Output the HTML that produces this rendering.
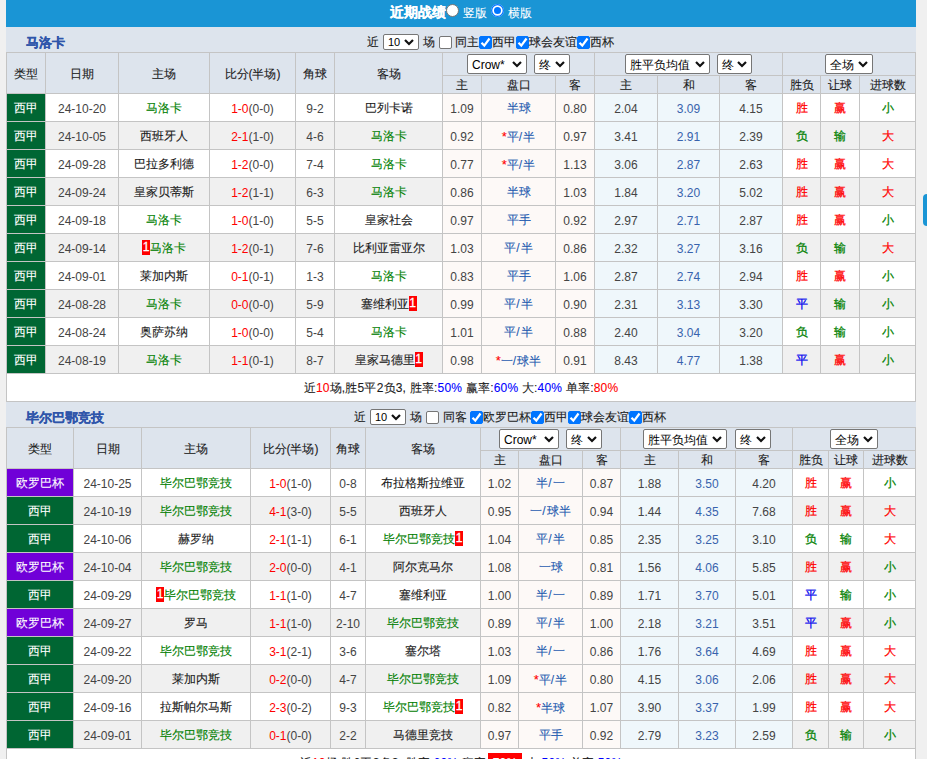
<!DOCTYPE html><html><head><meta charset="utf-8"><style>
*{margin:0;padding:0;box-sizing:border-box}
html,body{width:927px;height:759px;overflow:hidden;background:#f0f0f0;font-family:"Liberation Sans",sans-serif;font-size:12px;color:#1a1a1a}
body>div{position:absolute}
.c{position:absolute;text-align:center;white-space:nowrap;overflow:hidden;-webkit-text-stroke:0.1px}
.n{-webkit-text-stroke:0}
.t{position:absolute;white-space:nowrap;line-height:18px;-webkit-text-stroke:0.1px}
.ttl{position:absolute;font-size:13px;font-weight:bold;color:#2f55aa;-webkit-text-stroke:0.2px;line-height:25px;white-space:nowrap}
.hd{position:absolute;font-size:14px;font-weight:bold;color:#fff;-webkit-text-stroke:0.2px;line-height:22px;white-space:nowrap}
.sel{position:absolute;background:#fff;border:1px solid #767676;border-radius:2px;color:#000;white-space:nowrap}
.st{position:absolute;left:4px;top:1px}
.cb{position:absolute;width:13px;height:13px;border:1px solid #767676;border-radius:2px;background:#fff}
.cb.on{background:#0075ff;border-color:#0075ff}
.rad{position:absolute;width:13px;height:13px;border-radius:50%;background:#fff;border:1px solid #767676}
.rad.on{background:#0075ff;border:none;box-shadow:inset 0 0 0 1.3px #0075ff,inset 0 0 0 3px #fff}
.n{font-style:normal;position:relative;top:1px}
.rc{display:inline-block;background:#ff0000;color:#fff;font-weight:normal;font-size:12px;line-height:15px;width:8px;text-align:center;-webkit-text-stroke:0.3px;vertical-align:middle;margin-top:-2px}
</style></head><body><div style="left:6px;top:0;width:910px;height:27px;background:#1a95d5"></div>
<div class="hd" style="left:390px;top:1px;">近期战绩</div>
<div class="rad" style="left:446px;top:4px"></div>
<div class="t" style="left:463px;top:4px;color:#fff">竖版</div>
<div class="rad on" style="left:491px;top:4px"></div>
<div class="t" style="left:508px;top:4px;color:#fff">横版</div>
<div style="left:923px;top:194px;width:10px;height:32px;background:#1a95d5;border-radius:4px"></div>
<div style="left:6px;top:27px;width:910px;height:25px;background:#dde4ed"></div>
<div class="ttl" style="left:26px;top:30px;">马洛卡</div>
<div class="t" style="left:367px;top:33px;">近</div><div class="sel" style="left:383px;top:34px;width:36px;height:16px;line-height:15px"><span class="st" style="font-size:11px;top:0px">10</span><svg class="chev" width="10" height="7" viewBox="0 0 10 7" style="position:absolute;right:4px;top:4px"><path d="M1 1 L5 5 L9 1" fill="none" stroke="#111" stroke-width="2.2"/></svg></div><div class="t" style="left:423px;top:33px;">场</div><div class="cb" style="left:439px;top:36px"></div><div class="t" style="left:455px;top:33px;">同主</div><div class="cb on" style="left:479px;top:36px"><svg width="13" height="13" viewBox="0 0 13 13" style="position:absolute;left:0;top:0"><path d="M1.5 5.7 L4.3 8.6 L9.5 1.5" fill="none" stroke="#fff" stroke-width="2.2"/></svg></div><div class="t" style="left:492px;top:33px;">西甲</div><div class="cb on" style="left:516px;top:36px"><svg width="13" height="13" viewBox="0 0 13 13" style="position:absolute;left:0;top:0"><path d="M1.5 5.7 L4.3 8.6 L9.5 1.5" fill="none" stroke="#fff" stroke-width="2.2"/></svg></div><div class="t" style="left:529px;top:33px;">球会友谊</div><div class="cb on" style="left:577px;top:36px"><svg width="13" height="13" viewBox="0 0 13 13" style="position:absolute;left:0;top:0"><path d="M1.5 5.7 L4.3 8.6 L9.5 1.5" fill="none" stroke="#fff" stroke-width="2.2"/></svg></div><div class="t" style="left:590px;top:33px;">西杯</div>
<div style="left:6px;top:52px;width:910px;height:41px;background:#dde4ed"></div>
<div style="left:6px;top:94px;width:910px;height:27px;background:#ffffff"></div>
<div style="left:443px;top:94px;width:151px;height:27px;background:#fdf9f7"></div>
<div style="left:595px;top:94px;width:187px;height:27px;background:#eff7fb"></div>
<div style="left:7px;top:94px;width:38px;height:27px;background:#006633"></div>
<div style="left:6px;top:122px;width:910px;height:27px;background:#f0f0f0"></div>
<div style="left:443px;top:122px;width:151px;height:27px;background:#fdf9f7"></div>
<div style="left:595px;top:122px;width:187px;height:27px;background:#eff7fb"></div>
<div style="left:7px;top:122px;width:38px;height:27px;background:#006633"></div>
<div style="left:6px;top:150px;width:910px;height:27px;background:#ffffff"></div>
<div style="left:443px;top:150px;width:151px;height:27px;background:#fdf9f7"></div>
<div style="left:595px;top:150px;width:187px;height:27px;background:#eff7fb"></div>
<div style="left:7px;top:150px;width:38px;height:27px;background:#006633"></div>
<div style="left:6px;top:178px;width:910px;height:27px;background:#f0f0f0"></div>
<div style="left:443px;top:178px;width:151px;height:27px;background:#fdf9f7"></div>
<div style="left:595px;top:178px;width:187px;height:27px;background:#eff7fb"></div>
<div style="left:7px;top:178px;width:38px;height:27px;background:#006633"></div>
<div style="left:6px;top:206px;width:910px;height:27px;background:#ffffff"></div>
<div style="left:443px;top:206px;width:151px;height:27px;background:#fdf9f7"></div>
<div style="left:595px;top:206px;width:187px;height:27px;background:#eff7fb"></div>
<div style="left:7px;top:206px;width:38px;height:27px;background:#006633"></div>
<div style="left:6px;top:234px;width:910px;height:27px;background:#f0f0f0"></div>
<div style="left:443px;top:234px;width:151px;height:27px;background:#fdf9f7"></div>
<div style="left:595px;top:234px;width:187px;height:27px;background:#eff7fb"></div>
<div style="left:7px;top:234px;width:38px;height:27px;background:#006633"></div>
<div style="left:6px;top:262px;width:910px;height:27px;background:#ffffff"></div>
<div style="left:443px;top:262px;width:151px;height:27px;background:#fdf9f7"></div>
<div style="left:595px;top:262px;width:187px;height:27px;background:#eff7fb"></div>
<div style="left:7px;top:262px;width:38px;height:27px;background:#006633"></div>
<div style="left:6px;top:290px;width:910px;height:27px;background:#f0f0f0"></div>
<div style="left:443px;top:290px;width:151px;height:27px;background:#fdf9f7"></div>
<div style="left:595px;top:290px;width:187px;height:27px;background:#eff7fb"></div>
<div style="left:7px;top:290px;width:38px;height:27px;background:#006633"></div>
<div style="left:6px;top:318px;width:910px;height:27px;background:#ffffff"></div>
<div style="left:443px;top:318px;width:151px;height:27px;background:#fdf9f7"></div>
<div style="left:595px;top:318px;width:187px;height:27px;background:#eff7fb"></div>
<div style="left:7px;top:318px;width:38px;height:27px;background:#006633"></div>
<div style="left:6px;top:346px;width:910px;height:27px;background:#f0f0f0"></div>
<div style="left:443px;top:346px;width:151px;height:27px;background:#fdf9f7"></div>
<div style="left:595px;top:346px;width:187px;height:27px;background:#eff7fb"></div>
<div style="left:7px;top:346px;width:38px;height:27px;background:#006633"></div>
<div style="left:6px;top:374px;width:910px;height:27px;background:#fff"></div>
<div style="left:6px;top:52px;width:910px;height:1px;background:#c4c4c4"></div>
<div style="left:6px;top:93px;width:910px;height:1px;background:#c4c4c4"></div>
<div style="left:442px;top:75px;width:474px;height:1px;background:#c4c4c4"></div>
<div style="left:6px;top:121px;width:910px;height:1px;background:#c4c4c4"></div>
<div style="left:6px;top:149px;width:910px;height:1px;background:#c4c4c4"></div>
<div style="left:6px;top:177px;width:910px;height:1px;background:#c4c4c4"></div>
<div style="left:6px;top:205px;width:910px;height:1px;background:#c4c4c4"></div>
<div style="left:6px;top:233px;width:910px;height:1px;background:#c4c4c4"></div>
<div style="left:6px;top:261px;width:910px;height:1px;background:#c4c4c4"></div>
<div style="left:6px;top:289px;width:910px;height:1px;background:#c4c4c4"></div>
<div style="left:6px;top:317px;width:910px;height:1px;background:#c4c4c4"></div>
<div style="left:6px;top:345px;width:910px;height:1px;background:#c4c4c4"></div>
<div style="left:6px;top:373px;width:910px;height:1px;background:#c4c4c4"></div>
<div style="left:6px;top:401px;width:910px;height:1px;background:#c4c4c4"></div>
<div style="left:6px;top:52px;width:1px;height:350px;background:#c4c4c4"></div>
<div style="left:45px;top:52px;width:1px;height:322px;background:#c4c4c4"></div>
<div style="left:118px;top:52px;width:1px;height:322px;background:#c4c4c4"></div>
<div style="left:209px;top:52px;width:1px;height:322px;background:#c4c4c4"></div>
<div style="left:295px;top:52px;width:1px;height:322px;background:#c4c4c4"></div>
<div style="left:334px;top:52px;width:1px;height:322px;background:#c4c4c4"></div>
<div style="left:442px;top:52px;width:1px;height:322px;background:#c4c4c4"></div>
<div style="left:481px;top:75px;width:1px;height:299px;background:#c4c4c4"></div>
<div style="left:555px;top:75px;width:1px;height:299px;background:#c4c4c4"></div>
<div style="left:594px;top:52px;width:1px;height:322px;background:#c4c4c4"></div>
<div style="left:657px;top:75px;width:1px;height:299px;background:#c4c4c4"></div>
<div style="left:719px;top:75px;width:1px;height:299px;background:#c4c4c4"></div>
<div style="left:782px;top:52px;width:1px;height:322px;background:#c4c4c4"></div>
<div style="left:820px;top:75px;width:1px;height:299px;background:#c4c4c4"></div>
<div style="left:859px;top:75px;width:1px;height:299px;background:#c4c4c4"></div>
<div style="left:915px;top:52px;width:1px;height:350px;background:#c4c4c4"></div>
<div class="c" style="left:7px;top:54px;width:38px;height:40px;line-height:40px;">类型</div>
<div class="c" style="left:46px;top:54px;width:72px;height:40px;line-height:40px;">日期</div>
<div class="c" style="left:119px;top:54px;width:90px;height:40px;line-height:40px;">主场</div>
<div class="c" style="left:210px;top:54px;width:85px;height:40px;line-height:40px;">比分(半场)</div>
<div class="c" style="left:296px;top:54px;width:38px;height:40px;line-height:40px;">角球</div>
<div class="c" style="left:335px;top:54px;width:107px;height:40px;line-height:40px;">客场</div>
<div class="c" style="left:443px;top:77px;width:38px;height:17px;line-height:17px;">主</div>
<div class="c" style="left:482px;top:77px;width:73px;height:17px;line-height:17px;">盘口</div>
<div class="c" style="left:556px;top:77px;width:38px;height:17px;line-height:17px;">客</div>
<div class="c" style="left:595px;top:77px;width:62px;height:17px;line-height:17px;">主</div>
<div class="c" style="left:658px;top:77px;width:61px;height:17px;line-height:17px;">和</div>
<div class="c" style="left:720px;top:77px;width:62px;height:17px;line-height:17px;">客</div>
<div class="c" style="left:783px;top:77px;width:37px;height:17px;line-height:17px;">胜负</div>
<div class="c" style="left:821px;top:77px;width:38px;height:17px;line-height:17px;">让球</div>
<div class="c" style="left:860px;top:77px;width:55px;height:17px;line-height:17px;">进球数</div>
<div class="sel" style="left:467px;top:54px;width:60px;height:20px;line-height:19px"><span class="st" style="font-size:12px;top:1px">Crow*</span><svg class="chev" width="10" height="7" viewBox="0 0 10 7" style="position:absolute;right:4px;top:6px"><path d="M1 1 L5 5 L9 1" fill="none" stroke="#111" stroke-width="2.2"/></svg></div><div class="sel" style="left:534px;top:54px;width:36px;height:20px;line-height:19px"><span class="st" style="font-size:12px;top:1px">终</span><svg class="chev" width="10" height="7" viewBox="0 0 10 7" style="position:absolute;right:4px;top:6px"><path d="M1 1 L5 5 L9 1" fill="none" stroke="#111" stroke-width="2.2"/></svg></div><div class="sel" style="left:625px;top:54px;width:85px;height:20px;line-height:19px"><span class="st" style="font-size:12px;top:1px">胜平负均值</span><svg class="chev" width="10" height="7" viewBox="0 0 10 7" style="position:absolute;right:4px;top:6px"><path d="M1 1 L5 5 L9 1" fill="none" stroke="#111" stroke-width="2.2"/></svg></div><div class="sel" style="left:717px;top:54px;width:35px;height:20px;line-height:19px"><span class="st" style="font-size:12px;top:1px">终</span><svg class="chev" width="10" height="7" viewBox="0 0 10 7" style="position:absolute;right:4px;top:6px"><path d="M1 1 L5 5 L9 1" fill="none" stroke="#111" stroke-width="2.2"/></svg></div><div class="sel" style="left:825px;top:54px;width:48px;height:20px;line-height:19px"><span class="st" style="font-size:12px;top:1px">全场</span><svg class="chev" width="10" height="7" viewBox="0 0 10 7" style="position:absolute;right:4px;top:6px"><path d="M1 1 L5 5 L9 1" fill="none" stroke="#111" stroke-width="2.2"/></svg></div>
<div class="c" style="left:7px;top:95px;width:38px;height:27px;line-height:27px;color:#fff">西甲</div>
<div class="c" style="left:46px;top:95px;width:72px;height:27px;line-height:27px;color:#444"><i class="n">24-10-20</i></div>
<div class="c" style="left:119px;top:95px;width:90px;height:27px;line-height:27px;"><span style="color:#008000">马洛卡</span></div>
<div class="c" style="left:210px;top:95px;width:85px;height:27px;line-height:27px;color:#444"><span style="color:#ff0000"><i class="n">1-0</i></span><i class="n">(0-0)</i></div>
<div class="c" style="left:296px;top:95px;width:38px;height:27px;line-height:27px;color:#444"><i class="n">9-2</i></div>
<div class="c" style="left:335px;top:95px;width:107px;height:27px;line-height:27px;"><span>巴列卡诺</span></div>
<div class="c" style="left:443px;top:95px;width:38px;height:27px;line-height:27px;color:#444"><i class="n">1.09</i></div>
<div class="c" style="left:482px;top:95px;width:73px;height:27px;line-height:27px;color:#1f5bb0">半球</div>
<div class="c" style="left:556px;top:95px;width:38px;height:27px;line-height:27px;color:#444"><i class="n">0.80</i></div>
<div class="c" style="left:595px;top:95px;width:62px;height:27px;line-height:27px;color:#444"><i class="n">2.04</i></div>
<div class="c" style="left:658px;top:95px;width:61px;height:27px;line-height:27px;color:#3863ad"><i class="n">3.09</i></div>
<div class="c" style="left:720px;top:95px;width:62px;height:27px;line-height:27px;color:#444"><i class="n">4.15</i></div>
<div class="c" style="left:783px;top:95px;width:37px;height:27px;line-height:27px;color:#ff0000;-webkit-text-stroke:0.25px">胜</div>
<div class="c" style="left:821px;top:95px;width:38px;height:27px;line-height:27px;color:#ff0000;-webkit-text-stroke:0.25px">赢</div>
<div class="c" style="left:860px;top:95px;width:55px;height:27px;line-height:27px;color:#008000;-webkit-text-stroke:0.25px">小</div>
<div class="c" style="left:7px;top:123px;width:38px;height:27px;line-height:27px;color:#fff">西甲</div>
<div class="c" style="left:46px;top:123px;width:72px;height:27px;line-height:27px;color:#444"><i class="n">24-10-05</i></div>
<div class="c" style="left:119px;top:123px;width:90px;height:27px;line-height:27px;"><span>西班牙人</span></div>
<div class="c" style="left:210px;top:123px;width:85px;height:27px;line-height:27px;color:#444"><span style="color:#ff0000"><i class="n">2-1</i></span><i class="n">(1-0)</i></div>
<div class="c" style="left:296px;top:123px;width:38px;height:27px;line-height:27px;color:#444"><i class="n">4-6</i></div>
<div class="c" style="left:335px;top:123px;width:107px;height:27px;line-height:27px;"><span style="color:#008000">马洛卡</span></div>
<div class="c" style="left:443px;top:123px;width:38px;height:27px;line-height:27px;color:#444"><i class="n">0.92</i></div>
<div class="c" style="left:482px;top:123px;width:73px;height:27px;line-height:27px;color:#1f5bb0"><span style="color:#ff0000;font-size:13px">*</span>平<span style="margin-right:1px">/</span>半</div>
<div class="c" style="left:556px;top:123px;width:38px;height:27px;line-height:27px;color:#444"><i class="n">0.97</i></div>
<div class="c" style="left:595px;top:123px;width:62px;height:27px;line-height:27px;color:#444"><i class="n">3.41</i></div>
<div class="c" style="left:658px;top:123px;width:61px;height:27px;line-height:27px;color:#3863ad"><i class="n">2.91</i></div>
<div class="c" style="left:720px;top:123px;width:62px;height:27px;line-height:27px;color:#444"><i class="n">2.39</i></div>
<div class="c" style="left:783px;top:123px;width:37px;height:27px;line-height:27px;color:#008000;-webkit-text-stroke:0.25px">负</div>
<div class="c" style="left:821px;top:123px;width:38px;height:27px;line-height:27px;color:#008000;-webkit-text-stroke:0.25px">输</div>
<div class="c" style="left:860px;top:123px;width:55px;height:27px;line-height:27px;color:#ff0000;-webkit-text-stroke:0.25px">大</div>
<div class="c" style="left:7px;top:151px;width:38px;height:27px;line-height:27px;color:#fff">西甲</div>
<div class="c" style="left:46px;top:151px;width:72px;height:27px;line-height:27px;color:#444"><i class="n">24-09-28</i></div>
<div class="c" style="left:119px;top:151px;width:90px;height:27px;line-height:27px;"><span>巴拉多利德</span></div>
<div class="c" style="left:210px;top:151px;width:85px;height:27px;line-height:27px;color:#444"><span style="color:#ff0000"><i class="n">1-2</i></span><i class="n">(0-0)</i></div>
<div class="c" style="left:296px;top:151px;width:38px;height:27px;line-height:27px;color:#444"><i class="n">7-4</i></div>
<div class="c" style="left:335px;top:151px;width:107px;height:27px;line-height:27px;"><span style="color:#008000">马洛卡</span></div>
<div class="c" style="left:443px;top:151px;width:38px;height:27px;line-height:27px;color:#444"><i class="n">0.77</i></div>
<div class="c" style="left:482px;top:151px;width:73px;height:27px;line-height:27px;color:#1f5bb0"><span style="color:#ff0000;font-size:13px">*</span>平<span style="margin-right:1px">/</span>半</div>
<div class="c" style="left:556px;top:151px;width:38px;height:27px;line-height:27px;color:#444"><i class="n">1.13</i></div>
<div class="c" style="left:595px;top:151px;width:62px;height:27px;line-height:27px;color:#444"><i class="n">3.06</i></div>
<div class="c" style="left:658px;top:151px;width:61px;height:27px;line-height:27px;color:#3863ad"><i class="n">2.87</i></div>
<div class="c" style="left:720px;top:151px;width:62px;height:27px;line-height:27px;color:#444"><i class="n">2.63</i></div>
<div class="c" style="left:783px;top:151px;width:37px;height:27px;line-height:27px;color:#ff0000;-webkit-text-stroke:0.25px">胜</div>
<div class="c" style="left:821px;top:151px;width:38px;height:27px;line-height:27px;color:#ff0000;-webkit-text-stroke:0.25px">赢</div>
<div class="c" style="left:860px;top:151px;width:55px;height:27px;line-height:27px;color:#ff0000;-webkit-text-stroke:0.25px">大</div>
<div class="c" style="left:7px;top:179px;width:38px;height:27px;line-height:27px;color:#fff">西甲</div>
<div class="c" style="left:46px;top:179px;width:72px;height:27px;line-height:27px;color:#444"><i class="n">24-09-24</i></div>
<div class="c" style="left:119px;top:179px;width:90px;height:27px;line-height:27px;"><span>皇家贝蒂斯</span></div>
<div class="c" style="left:210px;top:179px;width:85px;height:27px;line-height:27px;color:#444"><span style="color:#ff0000"><i class="n">1-2</i></span><i class="n">(1-1)</i></div>
<div class="c" style="left:296px;top:179px;width:38px;height:27px;line-height:27px;color:#444"><i class="n">6-3</i></div>
<div class="c" style="left:335px;top:179px;width:107px;height:27px;line-height:27px;"><span style="color:#008000">马洛卡</span></div>
<div class="c" style="left:443px;top:179px;width:38px;height:27px;line-height:27px;color:#444"><i class="n">0.86</i></div>
<div class="c" style="left:482px;top:179px;width:73px;height:27px;line-height:27px;color:#1f5bb0">半球</div>
<div class="c" style="left:556px;top:179px;width:38px;height:27px;line-height:27px;color:#444"><i class="n">1.03</i></div>
<div class="c" style="left:595px;top:179px;width:62px;height:27px;line-height:27px;color:#444"><i class="n">1.84</i></div>
<div class="c" style="left:658px;top:179px;width:61px;height:27px;line-height:27px;color:#3863ad"><i class="n">3.20</i></div>
<div class="c" style="left:720px;top:179px;width:62px;height:27px;line-height:27px;color:#444"><i class="n">5.02</i></div>
<div class="c" style="left:783px;top:179px;width:37px;height:27px;line-height:27px;color:#ff0000;-webkit-text-stroke:0.25px">胜</div>
<div class="c" style="left:821px;top:179px;width:38px;height:27px;line-height:27px;color:#ff0000;-webkit-text-stroke:0.25px">赢</div>
<div class="c" style="left:860px;top:179px;width:55px;height:27px;line-height:27px;color:#ff0000;-webkit-text-stroke:0.25px">大</div>
<div class="c" style="left:7px;top:207px;width:38px;height:27px;line-height:27px;color:#fff">西甲</div>
<div class="c" style="left:46px;top:207px;width:72px;height:27px;line-height:27px;color:#444"><i class="n">24-09-18</i></div>
<div class="c" style="left:119px;top:207px;width:90px;height:27px;line-height:27px;"><span style="color:#008000">马洛卡</span></div>
<div class="c" style="left:210px;top:207px;width:85px;height:27px;line-height:27px;color:#444"><span style="color:#ff0000"><i class="n">1-0</i></span><i class="n">(1-0)</i></div>
<div class="c" style="left:296px;top:207px;width:38px;height:27px;line-height:27px;color:#444"><i class="n">5-5</i></div>
<div class="c" style="left:335px;top:207px;width:107px;height:27px;line-height:27px;"><span>皇家社会</span></div>
<div class="c" style="left:443px;top:207px;width:38px;height:27px;line-height:27px;color:#444"><i class="n">0.97</i></div>
<div class="c" style="left:482px;top:207px;width:73px;height:27px;line-height:27px;color:#1f5bb0">平手</div>
<div class="c" style="left:556px;top:207px;width:38px;height:27px;line-height:27px;color:#444"><i class="n">0.92</i></div>
<div class="c" style="left:595px;top:207px;width:62px;height:27px;line-height:27px;color:#444"><i class="n">2.97</i></div>
<div class="c" style="left:658px;top:207px;width:61px;height:27px;line-height:27px;color:#3863ad"><i class="n">2.71</i></div>
<div class="c" style="left:720px;top:207px;width:62px;height:27px;line-height:27px;color:#444"><i class="n">2.87</i></div>
<div class="c" style="left:783px;top:207px;width:37px;height:27px;line-height:27px;color:#ff0000;-webkit-text-stroke:0.25px">胜</div>
<div class="c" style="left:821px;top:207px;width:38px;height:27px;line-height:27px;color:#ff0000;-webkit-text-stroke:0.25px">赢</div>
<div class="c" style="left:860px;top:207px;width:55px;height:27px;line-height:27px;color:#008000;-webkit-text-stroke:0.25px">小</div>
<div class="c" style="left:7px;top:235px;width:38px;height:27px;line-height:27px;color:#fff">西甲</div>
<div class="c" style="left:46px;top:235px;width:72px;height:27px;line-height:27px;color:#444"><i class="n">24-09-14</i></div>
<div class="c" style="left:119px;top:235px;width:90px;height:27px;line-height:27px;"><b class="rc">1</b><span style="color:#008000">马洛卡</span></div>
<div class="c" style="left:210px;top:235px;width:85px;height:27px;line-height:27px;color:#444"><span style="color:#ff0000"><i class="n">1-2</i></span><i class="n">(0-1)</i></div>
<div class="c" style="left:296px;top:235px;width:38px;height:27px;line-height:27px;color:#444"><i class="n">7-6</i></div>
<div class="c" style="left:335px;top:235px;width:107px;height:27px;line-height:27px;"><span>比利亚雷亚尔</span></div>
<div class="c" style="left:443px;top:235px;width:38px;height:27px;line-height:27px;color:#444"><i class="n">1.03</i></div>
<div class="c" style="left:482px;top:235px;width:73px;height:27px;line-height:27px;color:#1f5bb0">平<span style="margin-right:1px">/</span>半</div>
<div class="c" style="left:556px;top:235px;width:38px;height:27px;line-height:27px;color:#444"><i class="n">0.86</i></div>
<div class="c" style="left:595px;top:235px;width:62px;height:27px;line-height:27px;color:#444"><i class="n">2.32</i></div>
<div class="c" style="left:658px;top:235px;width:61px;height:27px;line-height:27px;color:#3863ad"><i class="n">3.27</i></div>
<div class="c" style="left:720px;top:235px;width:62px;height:27px;line-height:27px;color:#444"><i class="n">3.16</i></div>
<div class="c" style="left:783px;top:235px;width:37px;height:27px;line-height:27px;color:#008000;-webkit-text-stroke:0.25px">负</div>
<div class="c" style="left:821px;top:235px;width:38px;height:27px;line-height:27px;color:#008000;-webkit-text-stroke:0.25px">输</div>
<div class="c" style="left:860px;top:235px;width:55px;height:27px;line-height:27px;color:#ff0000;-webkit-text-stroke:0.25px">大</div>
<div class="c" style="left:7px;top:263px;width:38px;height:27px;line-height:27px;color:#fff">西甲</div>
<div class="c" style="left:46px;top:263px;width:72px;height:27px;line-height:27px;color:#444"><i class="n">24-09-01</i></div>
<div class="c" style="left:119px;top:263px;width:90px;height:27px;line-height:27px;"><span>莱加内斯</span></div>
<div class="c" style="left:210px;top:263px;width:85px;height:27px;line-height:27px;color:#444"><span style="color:#ff0000"><i class="n">0-1</i></span><i class="n">(0-1)</i></div>
<div class="c" style="left:296px;top:263px;width:38px;height:27px;line-height:27px;color:#444"><i class="n">1-3</i></div>
<div class="c" style="left:335px;top:263px;width:107px;height:27px;line-height:27px;"><span style="color:#008000">马洛卡</span></div>
<div class="c" style="left:443px;top:263px;width:38px;height:27px;line-height:27px;color:#444"><i class="n">0.83</i></div>
<div class="c" style="left:482px;top:263px;width:73px;height:27px;line-height:27px;color:#1f5bb0">平手</div>
<div class="c" style="left:556px;top:263px;width:38px;height:27px;line-height:27px;color:#444"><i class="n">1.06</i></div>
<div class="c" style="left:595px;top:263px;width:62px;height:27px;line-height:27px;color:#444"><i class="n">2.87</i></div>
<div class="c" style="left:658px;top:263px;width:61px;height:27px;line-height:27px;color:#3863ad"><i class="n">2.74</i></div>
<div class="c" style="left:720px;top:263px;width:62px;height:27px;line-height:27px;color:#444"><i class="n">2.94</i></div>
<div class="c" style="left:783px;top:263px;width:37px;height:27px;line-height:27px;color:#ff0000;-webkit-text-stroke:0.25px">胜</div>
<div class="c" style="left:821px;top:263px;width:38px;height:27px;line-height:27px;color:#ff0000;-webkit-text-stroke:0.25px">赢</div>
<div class="c" style="left:860px;top:263px;width:55px;height:27px;line-height:27px;color:#008000;-webkit-text-stroke:0.25px">小</div>
<div class="c" style="left:7px;top:291px;width:38px;height:27px;line-height:27px;color:#fff">西甲</div>
<div class="c" style="left:46px;top:291px;width:72px;height:27px;line-height:27px;color:#444"><i class="n">24-08-28</i></div>
<div class="c" style="left:119px;top:291px;width:90px;height:27px;line-height:27px;"><span style="color:#008000">马洛卡</span></div>
<div class="c" style="left:210px;top:291px;width:85px;height:27px;line-height:27px;color:#444"><span style="color:#ff0000"><i class="n">0-0</i></span><i class="n">(0-0)</i></div>
<div class="c" style="left:296px;top:291px;width:38px;height:27px;line-height:27px;color:#444"><i class="n">5-9</i></div>
<div class="c" style="left:335px;top:291px;width:107px;height:27px;line-height:27px;"><span>塞维利亚</span><b class="rc">1</b></div>
<div class="c" style="left:443px;top:291px;width:38px;height:27px;line-height:27px;color:#444"><i class="n">0.99</i></div>
<div class="c" style="left:482px;top:291px;width:73px;height:27px;line-height:27px;color:#1f5bb0">平<span style="margin-right:1px">/</span>半</div>
<div class="c" style="left:556px;top:291px;width:38px;height:27px;line-height:27px;color:#444"><i class="n">0.90</i></div>
<div class="c" style="left:595px;top:291px;width:62px;height:27px;line-height:27px;color:#444"><i class="n">2.31</i></div>
<div class="c" style="left:658px;top:291px;width:61px;height:27px;line-height:27px;color:#3863ad"><i class="n">3.13</i></div>
<div class="c" style="left:720px;top:291px;width:62px;height:27px;line-height:27px;color:#444"><i class="n">3.30</i></div>
<div class="c" style="left:783px;top:291px;width:37px;height:27px;line-height:27px;color:#0000ee;-webkit-text-stroke:0.25px">平</div>
<div class="c" style="left:821px;top:291px;width:38px;height:27px;line-height:27px;color:#008000;-webkit-text-stroke:0.25px">输</div>
<div class="c" style="left:860px;top:291px;width:55px;height:27px;line-height:27px;color:#008000;-webkit-text-stroke:0.25px">小</div>
<div class="c" style="left:7px;top:319px;width:38px;height:27px;line-height:27px;color:#fff">西甲</div>
<div class="c" style="left:46px;top:319px;width:72px;height:27px;line-height:27px;color:#444"><i class="n">24-08-24</i></div>
<div class="c" style="left:119px;top:319px;width:90px;height:27px;line-height:27px;"><span>奥萨苏纳</span></div>
<div class="c" style="left:210px;top:319px;width:85px;height:27px;line-height:27px;color:#444"><span style="color:#ff0000"><i class="n">1-0</i></span><i class="n">(0-0)</i></div>
<div class="c" style="left:296px;top:319px;width:38px;height:27px;line-height:27px;color:#444"><i class="n">5-4</i></div>
<div class="c" style="left:335px;top:319px;width:107px;height:27px;line-height:27px;"><span style="color:#008000">马洛卡</span></div>
<div class="c" style="left:443px;top:319px;width:38px;height:27px;line-height:27px;color:#444"><i class="n">1.01</i></div>
<div class="c" style="left:482px;top:319px;width:73px;height:27px;line-height:27px;color:#1f5bb0">平<span style="margin-right:1px">/</span>半</div>
<div class="c" style="left:556px;top:319px;width:38px;height:27px;line-height:27px;color:#444"><i class="n">0.88</i></div>
<div class="c" style="left:595px;top:319px;width:62px;height:27px;line-height:27px;color:#444"><i class="n">2.40</i></div>
<div class="c" style="left:658px;top:319px;width:61px;height:27px;line-height:27px;color:#3863ad"><i class="n">3.04</i></div>
<div class="c" style="left:720px;top:319px;width:62px;height:27px;line-height:27px;color:#444"><i class="n">3.20</i></div>
<div class="c" style="left:783px;top:319px;width:37px;height:27px;line-height:27px;color:#008000;-webkit-text-stroke:0.25px">负</div>
<div class="c" style="left:821px;top:319px;width:38px;height:27px;line-height:27px;color:#008000;-webkit-text-stroke:0.25px">输</div>
<div class="c" style="left:860px;top:319px;width:55px;height:27px;line-height:27px;color:#008000;-webkit-text-stroke:0.25px">小</div>
<div class="c" style="left:7px;top:347px;width:38px;height:27px;line-height:27px;color:#fff">西甲</div>
<div class="c" style="left:46px;top:347px;width:72px;height:27px;line-height:27px;color:#444"><i class="n">24-08-19</i></div>
<div class="c" style="left:119px;top:347px;width:90px;height:27px;line-height:27px;"><span style="color:#008000">马洛卡</span></div>
<div class="c" style="left:210px;top:347px;width:85px;height:27px;line-height:27px;color:#444"><span style="color:#ff0000"><i class="n">1-1</i></span><i class="n">(0-1)</i></div>
<div class="c" style="left:296px;top:347px;width:38px;height:27px;line-height:27px;color:#444"><i class="n">8-7</i></div>
<div class="c" style="left:335px;top:347px;width:107px;height:27px;line-height:27px;"><span>皇家马德里</span><b class="rc">1</b></div>
<div class="c" style="left:443px;top:347px;width:38px;height:27px;line-height:27px;color:#444"><i class="n">0.98</i></div>
<div class="c" style="left:482px;top:347px;width:73px;height:27px;line-height:27px;color:#1f5bb0"><span style="color:#ff0000;font-size:13px">*</span>一<span style="margin-right:1px">/</span>球半</div>
<div class="c" style="left:556px;top:347px;width:38px;height:27px;line-height:27px;color:#444"><i class="n">0.91</i></div>
<div class="c" style="left:595px;top:347px;width:62px;height:27px;line-height:27px;color:#444"><i class="n">8.43</i></div>
<div class="c" style="left:658px;top:347px;width:61px;height:27px;line-height:27px;color:#3863ad"><i class="n">4.77</i></div>
<div class="c" style="left:720px;top:347px;width:62px;height:27px;line-height:27px;color:#444"><i class="n">1.38</i></div>
<div class="c" style="left:783px;top:347px;width:37px;height:27px;line-height:27px;color:#0000ee;-webkit-text-stroke:0.25px">平</div>
<div class="c" style="left:821px;top:347px;width:38px;height:27px;line-height:27px;color:#ff0000;-webkit-text-stroke:0.25px">赢</div>
<div class="c" style="left:860px;top:347px;width:55px;height:27px;line-height:27px;color:#008000;-webkit-text-stroke:0.25px">小</div>
<div class="c" style="left:7px;top:375px;width:908px;height:27px;line-height:27px;letter-spacing:0.2px">近<span style="color:#ff0000">10</span>场,胜5平2负3, 胜率:<span style="color:#0000ff">50%</span> 赢率:<span style="color:#0000ff">60%</span> 大:<span style="color:#0000ff">40%</span> 单率:<span style="color:#ff0000">80%</span></div>
<div style="left:6px;top:402px;width:910px;height:25px;background:#dde4ed"></div>
<div class="ttl" style="left:26px;top:405px;">毕尔巴鄂竞技</div>
<div class="t" style="left:354px;top:408px;">近</div><div class="sel" style="left:370px;top:409px;width:36px;height:16px;line-height:15px"><span class="st" style="font-size:11px;top:0px">10</span><svg class="chev" width="10" height="7" viewBox="0 0 10 7" style="position:absolute;right:4px;top:4px"><path d="M1 1 L5 5 L9 1" fill="none" stroke="#111" stroke-width="2.2"/></svg></div><div class="t" style="left:410px;top:408px;">场</div><div class="cb" style="left:426px;top:411px"></div><div class="t" style="left:443px;top:408px;">同客</div><div class="cb on" style="left:470px;top:411px"><svg width="13" height="13" viewBox="0 0 13 13" style="position:absolute;left:0;top:0"><path d="M1.5 5.7 L4.3 8.6 L9.5 1.5" fill="none" stroke="#fff" stroke-width="2.2"/></svg></div><div class="t" style="left:483px;top:408px;">欧罗巴杯</div><div class="cb on" style="left:531px;top:411px"><svg width="13" height="13" viewBox="0 0 13 13" style="position:absolute;left:0;top:0"><path d="M1.5 5.7 L4.3 8.6 L9.5 1.5" fill="none" stroke="#fff" stroke-width="2.2"/></svg></div><div class="t" style="left:544px;top:408px;">西甲</div><div class="cb on" style="left:568px;top:411px"><svg width="13" height="13" viewBox="0 0 13 13" style="position:absolute;left:0;top:0"><path d="M1.5 5.7 L4.3 8.6 L9.5 1.5" fill="none" stroke="#fff" stroke-width="2.2"/></svg></div><div class="t" style="left:581px;top:408px;">球会友谊</div><div class="cb on" style="left:629px;top:411px"><svg width="13" height="13" viewBox="0 0 13 13" style="position:absolute;left:0;top:0"><path d="M1.5 5.7 L4.3 8.6 L9.5 1.5" fill="none" stroke="#fff" stroke-width="2.2"/></svg></div><div class="t" style="left:642px;top:408px;">西杯</div>
<div style="left:6px;top:427px;width:910px;height:41px;background:#dde4ed"></div>
<div style="left:6px;top:469px;width:910px;height:27px;background:#ffffff"></div>
<div style="left:481px;top:469px;width:139px;height:27px;background:#fdf9f7"></div>
<div style="left:621px;top:469px;width:171px;height:27px;background:#eff7fb"></div>
<div style="left:7px;top:469px;width:66px;height:27px;background:#7000d8"></div>
<div style="left:6px;top:497px;width:910px;height:27px;background:#f0f0f0"></div>
<div style="left:481px;top:497px;width:139px;height:27px;background:#fdf9f7"></div>
<div style="left:621px;top:497px;width:171px;height:27px;background:#eff7fb"></div>
<div style="left:7px;top:497px;width:66px;height:27px;background:#006633"></div>
<div style="left:6px;top:525px;width:910px;height:27px;background:#ffffff"></div>
<div style="left:481px;top:525px;width:139px;height:27px;background:#fdf9f7"></div>
<div style="left:621px;top:525px;width:171px;height:27px;background:#eff7fb"></div>
<div style="left:7px;top:525px;width:66px;height:27px;background:#006633"></div>
<div style="left:6px;top:553px;width:910px;height:27px;background:#f0f0f0"></div>
<div style="left:481px;top:553px;width:139px;height:27px;background:#fdf9f7"></div>
<div style="left:621px;top:553px;width:171px;height:27px;background:#eff7fb"></div>
<div style="left:7px;top:553px;width:66px;height:27px;background:#7000d8"></div>
<div style="left:6px;top:581px;width:910px;height:27px;background:#ffffff"></div>
<div style="left:481px;top:581px;width:139px;height:27px;background:#fdf9f7"></div>
<div style="left:621px;top:581px;width:171px;height:27px;background:#eff7fb"></div>
<div style="left:7px;top:581px;width:66px;height:27px;background:#006633"></div>
<div style="left:6px;top:609px;width:910px;height:27px;background:#f0f0f0"></div>
<div style="left:481px;top:609px;width:139px;height:27px;background:#fdf9f7"></div>
<div style="left:621px;top:609px;width:171px;height:27px;background:#eff7fb"></div>
<div style="left:7px;top:609px;width:66px;height:27px;background:#7000d8"></div>
<div style="left:6px;top:637px;width:910px;height:27px;background:#ffffff"></div>
<div style="left:481px;top:637px;width:139px;height:27px;background:#fdf9f7"></div>
<div style="left:621px;top:637px;width:171px;height:27px;background:#eff7fb"></div>
<div style="left:7px;top:637px;width:66px;height:27px;background:#006633"></div>
<div style="left:6px;top:665px;width:910px;height:27px;background:#f0f0f0"></div>
<div style="left:481px;top:665px;width:139px;height:27px;background:#fdf9f7"></div>
<div style="left:621px;top:665px;width:171px;height:27px;background:#eff7fb"></div>
<div style="left:7px;top:665px;width:66px;height:27px;background:#006633"></div>
<div style="left:6px;top:693px;width:910px;height:27px;background:#ffffff"></div>
<div style="left:481px;top:693px;width:139px;height:27px;background:#fdf9f7"></div>
<div style="left:621px;top:693px;width:171px;height:27px;background:#eff7fb"></div>
<div style="left:7px;top:693px;width:66px;height:27px;background:#006633"></div>
<div style="left:6px;top:721px;width:910px;height:27px;background:#f0f0f0"></div>
<div style="left:481px;top:721px;width:139px;height:27px;background:#fdf9f7"></div>
<div style="left:621px;top:721px;width:171px;height:27px;background:#eff7fb"></div>
<div style="left:7px;top:721px;width:66px;height:27px;background:#006633"></div>
<div style="left:6px;top:749px;width:910px;height:27px;background:#fff"></div>
<div style="left:6px;top:427px;width:910px;height:1px;background:#c4c4c4"></div>
<div style="left:6px;top:468px;width:910px;height:1px;background:#c4c4c4"></div>
<div style="left:480px;top:450px;width:436px;height:1px;background:#c4c4c4"></div>
<div style="left:6px;top:496px;width:910px;height:1px;background:#c4c4c4"></div>
<div style="left:6px;top:524px;width:910px;height:1px;background:#c4c4c4"></div>
<div style="left:6px;top:552px;width:910px;height:1px;background:#c4c4c4"></div>
<div style="left:6px;top:580px;width:910px;height:1px;background:#c4c4c4"></div>
<div style="left:6px;top:608px;width:910px;height:1px;background:#c4c4c4"></div>
<div style="left:6px;top:636px;width:910px;height:1px;background:#c4c4c4"></div>
<div style="left:6px;top:664px;width:910px;height:1px;background:#c4c4c4"></div>
<div style="left:6px;top:692px;width:910px;height:1px;background:#c4c4c4"></div>
<div style="left:6px;top:720px;width:910px;height:1px;background:#c4c4c4"></div>
<div style="left:6px;top:748px;width:910px;height:1px;background:#c4c4c4"></div>
<div style="left:6px;top:776px;width:910px;height:1px;background:#c4c4c4"></div>
<div style="left:6px;top:427px;width:1px;height:350px;background:#c4c4c4"></div>
<div style="left:73px;top:427px;width:1px;height:322px;background:#c4c4c4"></div>
<div style="left:141px;top:427px;width:1px;height:322px;background:#c4c4c4"></div>
<div style="left:250px;top:427px;width:1px;height:322px;background:#c4c4c4"></div>
<div style="left:330px;top:427px;width:1px;height:322px;background:#c4c4c4"></div>
<div style="left:365px;top:427px;width:1px;height:322px;background:#c4c4c4"></div>
<div style="left:480px;top:427px;width:1px;height:322px;background:#c4c4c4"></div>
<div style="left:518px;top:450px;width:1px;height:299px;background:#c4c4c4"></div>
<div style="left:582px;top:450px;width:1px;height:299px;background:#c4c4c4"></div>
<div style="left:620px;top:427px;width:1px;height:322px;background:#c4c4c4"></div>
<div style="left:678px;top:450px;width:1px;height:299px;background:#c4c4c4"></div>
<div style="left:735px;top:450px;width:1px;height:299px;background:#c4c4c4"></div>
<div style="left:792px;top:427px;width:1px;height:322px;background:#c4c4c4"></div>
<div style="left:828px;top:450px;width:1px;height:299px;background:#c4c4c4"></div>
<div style="left:863px;top:450px;width:1px;height:299px;background:#c4c4c4"></div>
<div style="left:915px;top:427px;width:1px;height:350px;background:#c4c4c4"></div>
<div class="c" style="left:7px;top:429px;width:66px;height:40px;line-height:40px;">类型</div>
<div class="c" style="left:74px;top:429px;width:67px;height:40px;line-height:40px;">日期</div>
<div class="c" style="left:142px;top:429px;width:108px;height:40px;line-height:40px;">主场</div>
<div class="c" style="left:251px;top:429px;width:79px;height:40px;line-height:40px;">比分(半场)</div>
<div class="c" style="left:331px;top:429px;width:34px;height:40px;line-height:40px;">角球</div>
<div class="c" style="left:366px;top:429px;width:114px;height:40px;line-height:40px;">客场</div>
<div class="c" style="left:481px;top:452px;width:37px;height:17px;line-height:17px;">主</div>
<div class="c" style="left:519px;top:452px;width:63px;height:17px;line-height:17px;">盘口</div>
<div class="c" style="left:583px;top:452px;width:37px;height:17px;line-height:17px;">客</div>
<div class="c" style="left:621px;top:452px;width:57px;height:17px;line-height:17px;">主</div>
<div class="c" style="left:679px;top:452px;width:56px;height:17px;line-height:17px;">和</div>
<div class="c" style="left:736px;top:452px;width:56px;height:17px;line-height:17px;">客</div>
<div class="c" style="left:793px;top:452px;width:35px;height:17px;line-height:17px;">胜负</div>
<div class="c" style="left:829px;top:452px;width:34px;height:17px;line-height:17px;">让球</div>
<div class="c" style="left:864px;top:452px;width:51px;height:17px;line-height:17px;">进球数</div>
<div class="sel" style="left:499px;top:429px;width:60px;height:20px;line-height:19px"><span class="st" style="font-size:12px;top:1px">Crow*</span><svg class="chev" width="10" height="7" viewBox="0 0 10 7" style="position:absolute;right:4px;top:6px"><path d="M1 1 L5 5 L9 1" fill="none" stroke="#111" stroke-width="2.2"/></svg></div><div class="sel" style="left:566px;top:429px;width:36px;height:20px;line-height:19px"><span class="st" style="font-size:12px;top:1px">终</span><svg class="chev" width="10" height="7" viewBox="0 0 10 7" style="position:absolute;right:4px;top:6px"><path d="M1 1 L5 5 L9 1" fill="none" stroke="#111" stroke-width="2.2"/></svg></div><div class="sel" style="left:643px;top:429px;width:84px;height:20px;line-height:19px"><span class="st" style="font-size:12px;top:1px">胜平负均值</span><svg class="chev" width="10" height="7" viewBox="0 0 10 7" style="position:absolute;right:4px;top:6px"><path d="M1 1 L5 5 L9 1" fill="none" stroke="#111" stroke-width="2.2"/></svg></div><div class="sel" style="left:735px;top:429px;width:36px;height:20px;line-height:19px"><span class="st" style="font-size:12px;top:1px">终</span><svg class="chev" width="10" height="7" viewBox="0 0 10 7" style="position:absolute;right:4px;top:6px"><path d="M1 1 L5 5 L9 1" fill="none" stroke="#111" stroke-width="2.2"/></svg></div><div class="sel" style="left:830px;top:429px;width:48px;height:20px;line-height:19px"><span class="st" style="font-size:12px;top:1px">全场</span><svg class="chev" width="10" height="7" viewBox="0 0 10 7" style="position:absolute;right:4px;top:6px"><path d="M1 1 L5 5 L9 1" fill="none" stroke="#111" stroke-width="2.2"/></svg></div>
<div class="c" style="left:7px;top:470px;width:66px;height:27px;line-height:27px;color:#fff">欧罗巴杯</div>
<div class="c" style="left:74px;top:470px;width:67px;height:27px;line-height:27px;color:#444"><i class="n">24-10-25</i></div>
<div class="c" style="left:142px;top:470px;width:108px;height:27px;line-height:27px;"><span style="color:#008000">毕尔巴鄂竞技</span></div>
<div class="c" style="left:251px;top:470px;width:79px;height:27px;line-height:27px;color:#444"><span style="color:#ff0000"><i class="n">1-0</i></span><i class="n">(1-0)</i></div>
<div class="c" style="left:331px;top:470px;width:34px;height:27px;line-height:27px;color:#444"><i class="n">0-8</i></div>
<div class="c" style="left:366px;top:470px;width:114px;height:27px;line-height:27px;"><span>布拉格斯拉维亚</span></div>
<div class="c" style="left:481px;top:470px;width:37px;height:27px;line-height:27px;color:#444"><i class="n">1.02</i></div>
<div class="c" style="left:519px;top:470px;width:63px;height:27px;line-height:27px;color:#1f5bb0">半<span style="margin-right:1px">/</span>一</div>
<div class="c" style="left:583px;top:470px;width:37px;height:27px;line-height:27px;color:#444"><i class="n">0.87</i></div>
<div class="c" style="left:621px;top:470px;width:57px;height:27px;line-height:27px;color:#444"><i class="n">1.88</i></div>
<div class="c" style="left:679px;top:470px;width:56px;height:27px;line-height:27px;color:#3863ad"><i class="n">3.50</i></div>
<div class="c" style="left:736px;top:470px;width:56px;height:27px;line-height:27px;color:#444"><i class="n">4.20</i></div>
<div class="c" style="left:793px;top:470px;width:35px;height:27px;line-height:27px;color:#ff0000;-webkit-text-stroke:0.25px">胜</div>
<div class="c" style="left:829px;top:470px;width:34px;height:27px;line-height:27px;color:#ff0000;-webkit-text-stroke:0.25px">赢</div>
<div class="c" style="left:864px;top:470px;width:51px;height:27px;line-height:27px;color:#008000;-webkit-text-stroke:0.25px">小</div>
<div class="c" style="left:7px;top:498px;width:66px;height:27px;line-height:27px;color:#fff">西甲</div>
<div class="c" style="left:74px;top:498px;width:67px;height:27px;line-height:27px;color:#444"><i class="n">24-10-19</i></div>
<div class="c" style="left:142px;top:498px;width:108px;height:27px;line-height:27px;"><span style="color:#008000">毕尔巴鄂竞技</span></div>
<div class="c" style="left:251px;top:498px;width:79px;height:27px;line-height:27px;color:#444"><span style="color:#ff0000"><i class="n">4-1</i></span><i class="n">(3-0)</i></div>
<div class="c" style="left:331px;top:498px;width:34px;height:27px;line-height:27px;color:#444"><i class="n">5-5</i></div>
<div class="c" style="left:366px;top:498px;width:114px;height:27px;line-height:27px;"><span>西班牙人</span></div>
<div class="c" style="left:481px;top:498px;width:37px;height:27px;line-height:27px;color:#444"><i class="n">0.95</i></div>
<div class="c" style="left:519px;top:498px;width:63px;height:27px;line-height:27px;color:#1f5bb0">一<span style="margin-right:1px">/</span>球半</div>
<div class="c" style="left:583px;top:498px;width:37px;height:27px;line-height:27px;color:#444"><i class="n">0.94</i></div>
<div class="c" style="left:621px;top:498px;width:57px;height:27px;line-height:27px;color:#444"><i class="n">1.44</i></div>
<div class="c" style="left:679px;top:498px;width:56px;height:27px;line-height:27px;color:#3863ad"><i class="n">4.35</i></div>
<div class="c" style="left:736px;top:498px;width:56px;height:27px;line-height:27px;color:#444"><i class="n">7.68</i></div>
<div class="c" style="left:793px;top:498px;width:35px;height:27px;line-height:27px;color:#ff0000;-webkit-text-stroke:0.25px">胜</div>
<div class="c" style="left:829px;top:498px;width:34px;height:27px;line-height:27px;color:#ff0000;-webkit-text-stroke:0.25px">赢</div>
<div class="c" style="left:864px;top:498px;width:51px;height:27px;line-height:27px;color:#ff0000;-webkit-text-stroke:0.25px">大</div>
<div class="c" style="left:7px;top:526px;width:66px;height:27px;line-height:27px;color:#fff">西甲</div>
<div class="c" style="left:74px;top:526px;width:67px;height:27px;line-height:27px;color:#444"><i class="n">24-10-06</i></div>
<div class="c" style="left:142px;top:526px;width:108px;height:27px;line-height:27px;"><span>赫罗纳</span></div>
<div class="c" style="left:251px;top:526px;width:79px;height:27px;line-height:27px;color:#444"><span style="color:#ff0000"><i class="n">2-1</i></span><i class="n">(1-1)</i></div>
<div class="c" style="left:331px;top:526px;width:34px;height:27px;line-height:27px;color:#444"><i class="n">6-1</i></div>
<div class="c" style="left:366px;top:526px;width:114px;height:27px;line-height:27px;"><span style="color:#008000">毕尔巴鄂竞技</span><b class="rc">1</b></div>
<div class="c" style="left:481px;top:526px;width:37px;height:27px;line-height:27px;color:#444"><i class="n">1.04</i></div>
<div class="c" style="left:519px;top:526px;width:63px;height:27px;line-height:27px;color:#1f5bb0">平<span style="margin-right:1px">/</span>半</div>
<div class="c" style="left:583px;top:526px;width:37px;height:27px;line-height:27px;color:#444"><i class="n">0.85</i></div>
<div class="c" style="left:621px;top:526px;width:57px;height:27px;line-height:27px;color:#444"><i class="n">2.35</i></div>
<div class="c" style="left:679px;top:526px;width:56px;height:27px;line-height:27px;color:#3863ad"><i class="n">3.25</i></div>
<div class="c" style="left:736px;top:526px;width:56px;height:27px;line-height:27px;color:#444"><i class="n">3.10</i></div>
<div class="c" style="left:793px;top:526px;width:35px;height:27px;line-height:27px;color:#008000;-webkit-text-stroke:0.25px">负</div>
<div class="c" style="left:829px;top:526px;width:34px;height:27px;line-height:27px;color:#008000;-webkit-text-stroke:0.25px">输</div>
<div class="c" style="left:864px;top:526px;width:51px;height:27px;line-height:27px;color:#ff0000;-webkit-text-stroke:0.25px">大</div>
<div class="c" style="left:7px;top:554px;width:66px;height:27px;line-height:27px;color:#fff">欧罗巴杯</div>
<div class="c" style="left:74px;top:554px;width:67px;height:27px;line-height:27px;color:#444"><i class="n">24-10-04</i></div>
<div class="c" style="left:142px;top:554px;width:108px;height:27px;line-height:27px;"><span style="color:#008000">毕尔巴鄂竞技</span></div>
<div class="c" style="left:251px;top:554px;width:79px;height:27px;line-height:27px;color:#444"><span style="color:#ff0000"><i class="n">2-0</i></span><i class="n">(0-0)</i></div>
<div class="c" style="left:331px;top:554px;width:34px;height:27px;line-height:27px;color:#444"><i class="n">4-1</i></div>
<div class="c" style="left:366px;top:554px;width:114px;height:27px;line-height:27px;"><span>阿尔克马尔</span></div>
<div class="c" style="left:481px;top:554px;width:37px;height:27px;line-height:27px;color:#444"><i class="n">1.08</i></div>
<div class="c" style="left:519px;top:554px;width:63px;height:27px;line-height:27px;color:#1f5bb0">一球</div>
<div class="c" style="left:583px;top:554px;width:37px;height:27px;line-height:27px;color:#444"><i class="n">0.81</i></div>
<div class="c" style="left:621px;top:554px;width:57px;height:27px;line-height:27px;color:#444"><i class="n">1.56</i></div>
<div class="c" style="left:679px;top:554px;width:56px;height:27px;line-height:27px;color:#3863ad"><i class="n">4.06</i></div>
<div class="c" style="left:736px;top:554px;width:56px;height:27px;line-height:27px;color:#444"><i class="n">5.85</i></div>
<div class="c" style="left:793px;top:554px;width:35px;height:27px;line-height:27px;color:#ff0000;-webkit-text-stroke:0.25px">胜</div>
<div class="c" style="left:829px;top:554px;width:34px;height:27px;line-height:27px;color:#ff0000;-webkit-text-stroke:0.25px">赢</div>
<div class="c" style="left:864px;top:554px;width:51px;height:27px;line-height:27px;color:#008000;-webkit-text-stroke:0.25px">小</div>
<div class="c" style="left:7px;top:582px;width:66px;height:27px;line-height:27px;color:#fff">西甲</div>
<div class="c" style="left:74px;top:582px;width:67px;height:27px;line-height:27px;color:#444"><i class="n">24-09-29</i></div>
<div class="c" style="left:142px;top:582px;width:108px;height:27px;line-height:27px;"><b class="rc">1</b><span style="color:#008000">毕尔巴鄂竞技</span></div>
<div class="c" style="left:251px;top:582px;width:79px;height:27px;line-height:27px;color:#444"><span style="color:#ff0000"><i class="n">1-1</i></span><i class="n">(1-0)</i></div>
<div class="c" style="left:331px;top:582px;width:34px;height:27px;line-height:27px;color:#444"><i class="n">4-7</i></div>
<div class="c" style="left:366px;top:582px;width:114px;height:27px;line-height:27px;"><span>塞维利亚</span></div>
<div class="c" style="left:481px;top:582px;width:37px;height:27px;line-height:27px;color:#444"><i class="n">1.00</i></div>
<div class="c" style="left:519px;top:582px;width:63px;height:27px;line-height:27px;color:#1f5bb0">半<span style="margin-right:1px">/</span>一</div>
<div class="c" style="left:583px;top:582px;width:37px;height:27px;line-height:27px;color:#444"><i class="n">0.89</i></div>
<div class="c" style="left:621px;top:582px;width:57px;height:27px;line-height:27px;color:#444"><i class="n">1.71</i></div>
<div class="c" style="left:679px;top:582px;width:56px;height:27px;line-height:27px;color:#3863ad"><i class="n">3.70</i></div>
<div class="c" style="left:736px;top:582px;width:56px;height:27px;line-height:27px;color:#444"><i class="n">5.01</i></div>
<div class="c" style="left:793px;top:582px;width:35px;height:27px;line-height:27px;color:#0000ee;-webkit-text-stroke:0.25px">平</div>
<div class="c" style="left:829px;top:582px;width:34px;height:27px;line-height:27px;color:#008000;-webkit-text-stroke:0.25px">输</div>
<div class="c" style="left:864px;top:582px;width:51px;height:27px;line-height:27px;color:#008000;-webkit-text-stroke:0.25px">小</div>
<div class="c" style="left:7px;top:610px;width:66px;height:27px;line-height:27px;color:#fff">欧罗巴杯</div>
<div class="c" style="left:74px;top:610px;width:67px;height:27px;line-height:27px;color:#444"><i class="n">24-09-27</i></div>
<div class="c" style="left:142px;top:610px;width:108px;height:27px;line-height:27px;"><span>罗马</span></div>
<div class="c" style="left:251px;top:610px;width:79px;height:27px;line-height:27px;color:#444"><span style="color:#ff0000"><i class="n">1-1</i></span><i class="n">(1-0)</i></div>
<div class="c" style="left:331px;top:610px;width:34px;height:27px;line-height:27px;color:#444"><i class="n">2-10</i></div>
<div class="c" style="left:366px;top:610px;width:114px;height:27px;line-height:27px;"><span style="color:#008000">毕尔巴鄂竞技</span></div>
<div class="c" style="left:481px;top:610px;width:37px;height:27px;line-height:27px;color:#444"><i class="n">0.89</i></div>
<div class="c" style="left:519px;top:610px;width:63px;height:27px;line-height:27px;color:#1f5bb0">平<span style="margin-right:1px">/</span>半</div>
<div class="c" style="left:583px;top:610px;width:37px;height:27px;line-height:27px;color:#444"><i class="n">1.00</i></div>
<div class="c" style="left:621px;top:610px;width:57px;height:27px;line-height:27px;color:#444"><i class="n">2.18</i></div>
<div class="c" style="left:679px;top:610px;width:56px;height:27px;line-height:27px;color:#3863ad"><i class="n">3.21</i></div>
<div class="c" style="left:736px;top:610px;width:56px;height:27px;line-height:27px;color:#444"><i class="n">3.51</i></div>
<div class="c" style="left:793px;top:610px;width:35px;height:27px;line-height:27px;color:#0000ee;-webkit-text-stroke:0.25px">平</div>
<div class="c" style="left:829px;top:610px;width:34px;height:27px;line-height:27px;color:#ff0000;-webkit-text-stroke:0.25px">赢</div>
<div class="c" style="left:864px;top:610px;width:51px;height:27px;line-height:27px;color:#008000;-webkit-text-stroke:0.25px">小</div>
<div class="c" style="left:7px;top:638px;width:66px;height:27px;line-height:27px;color:#fff">西甲</div>
<div class="c" style="left:74px;top:638px;width:67px;height:27px;line-height:27px;color:#444"><i class="n">24-09-22</i></div>
<div class="c" style="left:142px;top:638px;width:108px;height:27px;line-height:27px;"><span style="color:#008000">毕尔巴鄂竞技</span></div>
<div class="c" style="left:251px;top:638px;width:79px;height:27px;line-height:27px;color:#444"><span style="color:#ff0000"><i class="n">3-1</i></span><i class="n">(2-1)</i></div>
<div class="c" style="left:331px;top:638px;width:34px;height:27px;line-height:27px;color:#444"><i class="n">3-6</i></div>
<div class="c" style="left:366px;top:638px;width:114px;height:27px;line-height:27px;"><span>塞尔塔</span></div>
<div class="c" style="left:481px;top:638px;width:37px;height:27px;line-height:27px;color:#444"><i class="n">1.03</i></div>
<div class="c" style="left:519px;top:638px;width:63px;height:27px;line-height:27px;color:#1f5bb0">半<span style="margin-right:1px">/</span>一</div>
<div class="c" style="left:583px;top:638px;width:37px;height:27px;line-height:27px;color:#444"><i class="n">0.86</i></div>
<div class="c" style="left:621px;top:638px;width:57px;height:27px;line-height:27px;color:#444"><i class="n">1.76</i></div>
<div class="c" style="left:679px;top:638px;width:56px;height:27px;line-height:27px;color:#3863ad"><i class="n">3.64</i></div>
<div class="c" style="left:736px;top:638px;width:56px;height:27px;line-height:27px;color:#444"><i class="n">4.69</i></div>
<div class="c" style="left:793px;top:638px;width:35px;height:27px;line-height:27px;color:#ff0000;-webkit-text-stroke:0.25px">胜</div>
<div class="c" style="left:829px;top:638px;width:34px;height:27px;line-height:27px;color:#ff0000;-webkit-text-stroke:0.25px">赢</div>
<div class="c" style="left:864px;top:638px;width:51px;height:27px;line-height:27px;color:#ff0000;-webkit-text-stroke:0.25px">大</div>
<div class="c" style="left:7px;top:666px;width:66px;height:27px;line-height:27px;color:#fff">西甲</div>
<div class="c" style="left:74px;top:666px;width:67px;height:27px;line-height:27px;color:#444"><i class="n">24-09-20</i></div>
<div class="c" style="left:142px;top:666px;width:108px;height:27px;line-height:27px;"><span>莱加内斯</span></div>
<div class="c" style="left:251px;top:666px;width:79px;height:27px;line-height:27px;color:#444"><span style="color:#ff0000"><i class="n">0-2</i></span><i class="n">(0-0)</i></div>
<div class="c" style="left:331px;top:666px;width:34px;height:27px;line-height:27px;color:#444"><i class="n">4-7</i></div>
<div class="c" style="left:366px;top:666px;width:114px;height:27px;line-height:27px;"><span style="color:#008000">毕尔巴鄂竞技</span></div>
<div class="c" style="left:481px;top:666px;width:37px;height:27px;line-height:27px;color:#444"><i class="n">1.09</i></div>
<div class="c" style="left:519px;top:666px;width:63px;height:27px;line-height:27px;color:#1f5bb0"><span style="color:#ff0000;font-size:13px">*</span>平<span style="margin-right:1px">/</span>半</div>
<div class="c" style="left:583px;top:666px;width:37px;height:27px;line-height:27px;color:#444"><i class="n">0.80</i></div>
<div class="c" style="left:621px;top:666px;width:57px;height:27px;line-height:27px;color:#444"><i class="n">4.15</i></div>
<div class="c" style="left:679px;top:666px;width:56px;height:27px;line-height:27px;color:#3863ad"><i class="n">3.06</i></div>
<div class="c" style="left:736px;top:666px;width:56px;height:27px;line-height:27px;color:#444"><i class="n">2.06</i></div>
<div class="c" style="left:793px;top:666px;width:35px;height:27px;line-height:27px;color:#ff0000;-webkit-text-stroke:0.25px">胜</div>
<div class="c" style="left:829px;top:666px;width:34px;height:27px;line-height:27px;color:#ff0000;-webkit-text-stroke:0.25px">赢</div>
<div class="c" style="left:864px;top:666px;width:51px;height:27px;line-height:27px;color:#ff0000;-webkit-text-stroke:0.25px">大</div>
<div class="c" style="left:7px;top:694px;width:66px;height:27px;line-height:27px;color:#fff">西甲</div>
<div class="c" style="left:74px;top:694px;width:67px;height:27px;line-height:27px;color:#444"><i class="n">24-09-16</i></div>
<div class="c" style="left:142px;top:694px;width:108px;height:27px;line-height:27px;"><span>拉斯帕尔马斯</span></div>
<div class="c" style="left:251px;top:694px;width:79px;height:27px;line-height:27px;color:#444"><span style="color:#ff0000"><i class="n">2-3</i></span><i class="n">(0-2)</i></div>
<div class="c" style="left:331px;top:694px;width:34px;height:27px;line-height:27px;color:#444"><i class="n">9-3</i></div>
<div class="c" style="left:366px;top:694px;width:114px;height:27px;line-height:27px;"><span style="color:#008000">毕尔巴鄂竞技</span><b class="rc">1</b></div>
<div class="c" style="left:481px;top:694px;width:37px;height:27px;line-height:27px;color:#444"><i class="n">0.82</i></div>
<div class="c" style="left:519px;top:694px;width:63px;height:27px;line-height:27px;color:#1f5bb0"><span style="color:#ff0000;font-size:13px">*</span>半球</div>
<div class="c" style="left:583px;top:694px;width:37px;height:27px;line-height:27px;color:#444"><i class="n">1.07</i></div>
<div class="c" style="left:621px;top:694px;width:57px;height:27px;line-height:27px;color:#444"><i class="n">3.90</i></div>
<div class="c" style="left:679px;top:694px;width:56px;height:27px;line-height:27px;color:#3863ad"><i class="n">3.37</i></div>
<div class="c" style="left:736px;top:694px;width:56px;height:27px;line-height:27px;color:#444"><i class="n">1.99</i></div>
<div class="c" style="left:793px;top:694px;width:35px;height:27px;line-height:27px;color:#ff0000;-webkit-text-stroke:0.25px">胜</div>
<div class="c" style="left:829px;top:694px;width:34px;height:27px;line-height:27px;color:#ff0000;-webkit-text-stroke:0.25px">赢</div>
<div class="c" style="left:864px;top:694px;width:51px;height:27px;line-height:27px;color:#ff0000;-webkit-text-stroke:0.25px">大</div>
<div class="c" style="left:7px;top:722px;width:66px;height:27px;line-height:27px;color:#fff">西甲</div>
<div class="c" style="left:74px;top:722px;width:67px;height:27px;line-height:27px;color:#444"><i class="n">24-09-01</i></div>
<div class="c" style="left:142px;top:722px;width:108px;height:27px;line-height:27px;"><span style="color:#008000">毕尔巴鄂竞技</span></div>
<div class="c" style="left:251px;top:722px;width:79px;height:27px;line-height:27px;color:#444"><span style="color:#ff0000"><i class="n">0-1</i></span><i class="n">(0-0)</i></div>
<div class="c" style="left:331px;top:722px;width:34px;height:27px;line-height:27px;color:#444"><i class="n">2-2</i></div>
<div class="c" style="left:366px;top:722px;width:114px;height:27px;line-height:27px;"><span>马德里竞技</span></div>
<div class="c" style="left:481px;top:722px;width:37px;height:27px;line-height:27px;color:#444"><i class="n">0.97</i></div>
<div class="c" style="left:519px;top:722px;width:63px;height:27px;line-height:27px;color:#1f5bb0">平手</div>
<div class="c" style="left:583px;top:722px;width:37px;height:27px;line-height:27px;color:#444"><i class="n">0.92</i></div>
<div class="c" style="left:621px;top:722px;width:57px;height:27px;line-height:27px;color:#444"><i class="n">2.79</i></div>
<div class="c" style="left:679px;top:722px;width:56px;height:27px;line-height:27px;color:#3863ad"><i class="n">3.23</i></div>
<div class="c" style="left:736px;top:722px;width:56px;height:27px;line-height:27px;color:#444"><i class="n">2.59</i></div>
<div class="c" style="left:793px;top:722px;width:35px;height:27px;line-height:27px;color:#008000;-webkit-text-stroke:0.25px">负</div>
<div class="c" style="left:829px;top:722px;width:34px;height:27px;line-height:27px;color:#008000;-webkit-text-stroke:0.25px">输</div>
<div class="c" style="left:864px;top:722px;width:51px;height:27px;line-height:27px;color:#008000;-webkit-text-stroke:0.25px">小</div>
<div class="c" style="left:7px;top:750px;width:908px;height:27px;line-height:27px;letter-spacing:0.2px">近<span style="color:#ff0000">10</span>场,胜6平2负2, 胜率:<span style="color:#0000ff">60%</span> 赢率:<span style="background:#ff0000;color:#fff;padding:0 5px;margin-left:-2px;display:inline-block;line-height:20px">70%</span> 大:<span style="color:#0000ff">50%</span> 单率:<span style="color:#0000ff">50%</span></div></body></html>
